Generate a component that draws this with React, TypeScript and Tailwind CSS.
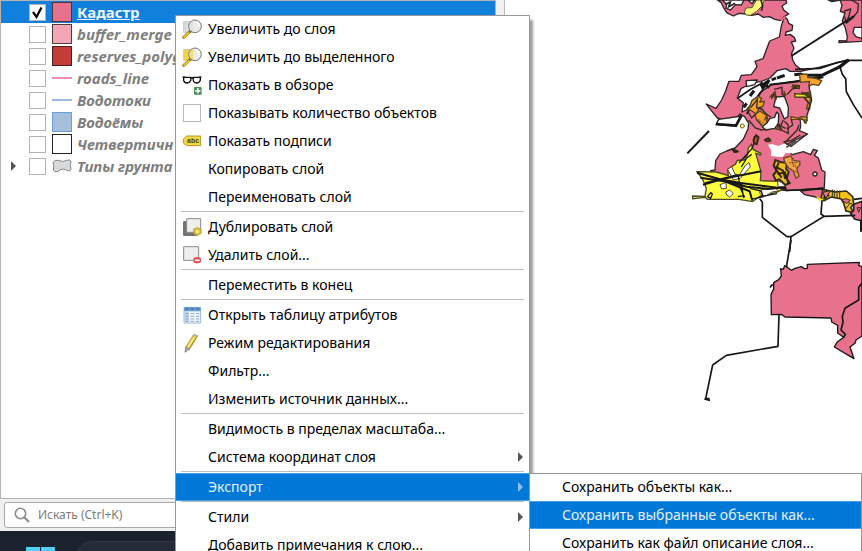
import React from "react";

type Swatch = "fill" | "line" | "polygon";

interface Layer {
  id: string;
  name: string;
  kind: Swatch;
  swatch: string;
  checked?: boolean;
  expandable?: boolean;
}

const layers: Layer[] = [
  { id: "cadastre", name: "Кадастр", kind: "fill", swatch: "bg-[#e8718d] border-[#54303a]", checked: true },
  { id: "buffer", name: "buffer_merge", kind: "fill", swatch: "bg-[#f4a6b4] border-[#4f3a3e]" },
  { id: "reserves", name: "reserves_polyg", kind: "fill", swatch: "bg-[#c33c39] border-[#4a1d1c]" },
  { id: "roads", name: "roads_line", kind: "line", swatch: "bg-[#eb92b2]" },
  { id: "streams", name: "Водотоки", kind: "line", swatch: "bg-[#9cbbe0]" },
  { id: "lakes", name: "Водоёмы", kind: "fill", swatch: "bg-[#a6bedd] border-[#6c9fd8]" },
  { id: "quaternary", name: "Четвертичн", kind: "fill", swatch: "bg-white border-[#232323]" },
  { id: "soil", name: "Типы грунта", kind: "polygon", swatch: "", expandable: true },
];

function LayerSwatch({ layer }: { layer: Layer }) {
  if (layer.kind === "fill") return <span className={`h-5 w-5 border ${layer.swatch}`} />;
  if (layer.kind === "line") return <span className={`h-[2px] w-5 ${layer.swatch}`} />;
  return (
    <svg viewBox="0 0 60 42" className="h-[14px] w-5" aria-hidden="true">
      <path
        d="M3 10 Q8 2 20 4 Q32 11 44 4 Q56 0 57 8 Q53 18 57 30 Q56 38 46 35 Q32 25 20 36 Q8 42 4 33 Q7 22 3 10Z"
        fill="#d9d9d9"
        stroke="#858585"
        strokeWidth="3"
      />
    </svg>
  );
}

function LayerRow({ layer }: { layer: Layer }) {
  return (
    <li className={`flex h-[22px] items-center pl-[10px] ${layer.checked ? "bg-[#1080dc]" : ""}`}>
      <span className="flex w-[18px] shrink-0 items-center">
        {layer.expandable && (
          <svg viewBox="0 0 5 10" className="h-[10px] w-[5px]" aria-hidden="true">
            <path d="M0 0L5 5L0 10Z" fill="#555" />
          </svg>
        )}
      </span>
      <span className="grid h-[17px] w-[17px] shrink-0">
        <input
          id={layer.id}
          type="checkbox"
          defaultChecked={layer.checked}
          className="col-start-1 row-start-1 h-[17px] w-[17px] appearance-none border border-[#b4b4b4] bg-white"
        />
        {layer.checked && (
          <svg viewBox="0 0 17 17" className="pointer-events-none z-10 col-start-1 row-start-1" aria-hidden="true">
            <path d="M4 8L7.5 13L12.5 3.5" fill="none" stroke="#000" strokeWidth="2.2" />
          </svg>
        )}
      </span>
      <span className="mr-[3px] ml-[6px] flex w-[22px] shrink-0 items-center">
        <LayerSwatch layer={layer} />
      </span>
      <label
        htmlFor={layer.id}
        className={`text-[15px] font-bold whitespace-nowrap ${layer.checked ? "text-[#eef6fd] underline" : "text-[#7f7f7f] italic"}`}
      >
        {layer.name}
      </label>
    </li>
  );
}

function ZoomIcon({ tint }: { tint: string }) {
  return (
    <svg viewBox="0 0 60 60" className="h-5 w-5" aria-hidden="true">
      <path d="M5 8H32V40H5Z" fill={tint} stroke="#b5b5a8" strokeWidth="2" />
      <path d="M26 36L5 55" stroke="#8f7c20" strokeWidth="9" strokeLinecap="round" />
      <path d="M20 42L6 54" stroke="#f0c63a" strokeWidth="5" strokeLinecap="round" />
      <circle cx="39" cy="22" r="19" fill="#ecece8" stroke="#777" strokeWidth="3" />
      <path d="M25 12Q29 7 34 6V39Q24 35 23 22Z" fill={tint} opacity="0.65" />
      <path d="M42 9Q51 13 51 23" fill="none" stroke="#fff" strokeWidth="4" />
    </svg>
  );
}

const icons: Record<string, React.ReactNode> = {
  zoom: <ZoomIcon tint="#dcdedd" />,
  zoomSelected: <ZoomIcon tint="#f2d744" />,
  overview: (
    <svg viewBox="0 0 60 60" className="h-5 w-5" aria-hidden="true">
      <path d="M1 6H8L12 8H48L53 6H59" stroke="#111" strokeWidth="3" fill="none" />
      <path d="M5 7H26V17Q22 24 15 24Q7 24 5 16ZM34 7H55V16Q52 24 44 24Q36 24 34 17Z" fill="#fff" stroke="#111" strokeWidth="4" />
      <path d="M26 11Q30 8 34 11" stroke="#111" strokeWidth="3" fill="none" />
      <rect x="36" y="36" width="23" height="23" rx="3" fill="#4f8f5b" />
      <path d="M47.500 40V55M40 47.500H55" stroke="#fff" strokeWidth="5" />
    </svg>
  ),
  labels: (
    <svg viewBox="0 0 60 36" className="h-3 w-5" aria-hidden="true">
      <path d="M14 3H56V32H14L4 24V12Z" fill="#f1d846" stroke="#b49a24" strokeWidth="3" />
      <text x="15" y="25" fontSize="21" fontWeight="700" fontFamily="Liberation Sans, sans-serif" fill="#4c4410">abc</text>
    </svg>
  ),
  duplicate: (
    <svg viewBox="0 0 60 60" className="h-5 w-5" aria-hidden="true">
      <path d="M5 14H14V46H44V55H5Z" fill="#777770" stroke="#666" strokeWidth="3" />
      <path d="M14 5H56V46H14Z" fill="#efefed" stroke="#8b8b86" strokeWidth="3" />
      <path d="M35 36L46 32L57 36V50L46 56L35 50Z" fill="#d7b936" stroke="#b4951f" strokeWidth="2" />
      <path d="M46 36L48 41H54L49 45L51 50L46 47L41 50L43 45L38 41H44Z" fill="#fff5b0" />
    </svg>
  ),
  remove: (
    <svg viewBox="0 0 60 60" className="h-5 w-5" aria-hidden="true">
      <path d="M5 5H50V46H5Z" fill="#eeeeec" stroke="#8b8b86" strokeWidth="3" />
      <rect x="34" y="37" width="23" height="18" rx="7" fill="#ee4750" />
      <path d="M38 46H53" stroke="#fff" strokeWidth="5" />
    </svg>
  ),
  table: (
    <svg viewBox="0 0 60 60" className="h-5 w-5" aria-hidden="true">
      <path d="M6 7H56V54H6Z" fill="#f5f8fc" stroke="#9dbbdc" strokeWidth="3" />
      <path d="M6 6H56V19H6Z" fill="#6d9fd2" />
      <path d="M7 20H21V53H7Z" fill="#b9d3ed" />
      <path d="M10 12H20M26 12H36M42 12H52" stroke="#315f94" strokeWidth="3" />
      <path d="M10 26H19M10 34H19M10 42H19M10 49H19M25 26H37M25 34H37M25 42H37M25 49H37M42 26H52M42 34H52M42 42H52M42 49H52" stroke="#8eacc9" strokeWidth="3" />
    </svg>
  ),
  pencil: (
    <svg viewBox="0 0 60 60" className="h-5 w-5" aria-hidden="true">
      <path d="M34 6L46 11L24 46L10 56L12 41Z" fill="#e5cf49" stroke="#877a2c" strokeWidth="2" />
      <path d="M37 12L18 43" stroke="#fff18e" strokeWidth="4" />
      <path d="M43 14L22 46" stroke="#ad9323" strokeWidth="3" />
      <path d="M36 2L48 7L46 13L33 8Z" fill="#b9b2a0" />
      <path d="M11 43L24 48L9 58Z" fill="#b5b5ad" stroke="#777" strokeWidth="2" />
    </svg>
  ),
};

interface Entry {
  label: string;
  icon?: string;
  sub?: boolean;
  check?: boolean;
  active?: boolean;
}

const groups: Entry[][] = [
  [
    { label: "Увеличить до слоя", icon: "zoom" },
    { label: "Увеличить до выделенного", icon: "zoomSelected" },
    { label: "Показать в обзоре", icon: "overview" },
    { label: "Показывать количество объектов", check: true },
    { label: "Показать подписи", icon: "labels" },
    { label: "Копировать слой" },
    { label: "Переименовать слой" },
  ],
  [
    { label: "Дублировать слой", icon: "duplicate" },
    { label: "Удалить слой...", icon: "remove" },
  ],
  [{ label: "Переместить в конец" }],
  [
    { label: "Открыть таблицу атрибутов", icon: "table" },
    { label: "Режим редактирования", icon: "pencil" },
    { label: "Фильтр..." },
    { label: "Изменить источник данных..." },
  ],
  [{ label: "Видимость в пределах масштаба..." }, { label: "Система координат слоя", sub: true }],
  [{ label: "Экспорт", sub: true, active: true }],
  [{ label: "Стили", sub: true }, { label: "Добавить примечания к слою..." }],
];

const exportEntries: Entry[] = [
  { label: "Сохранить объекты как..." },
  { label: "Сохранить выбранные объекты как...", active: true },
  { label: "Сохранить как файл описание слоя..." },
];

function MenuRow({ entry }: { entry: Entry }) {
  const row = "flex h-7 w-full items-center text-left text-[14px] leading-5 whitespace-nowrap";
  if (entry.check) {
    return (
      <label className={`${row} pl-[7px]`}>
        <input type="checkbox" className="mr-[7px] h-[18px] w-[18px] appearance-none border border-[#b8b8b8] bg-white" />
        {entry.label}
      </label>
    );
  }
  return (
    <button
      type="button"
      className={`${row} pr-[3px] pl-[6px] ${entry.active ? "border-y border-[#3fa0f2] bg-[#0078d7] text-[#e6f2fc]" : ""}`}
    >
      <span className="mr-[6px] flex w-5 shrink-0 items-center">{entry.icon && icons[entry.icon]}</span>
      <span className="flex-1">{entry.label}</span>
      {entry.sub && (
        <svg viewBox="0 0 5 10" className="mr-[3px] h-[10px] w-[5px]" aria-hidden="true">
          <path d="M0 0L5 5L0 10Z" fill={entry.active ? "#8cc2f0" : "#555"} />
        </svg>
      )}
    </button>
  );
}

function MapDrawing() {
  return (
    <svg viewBox="0 0 546 1260" className="h-[420px] w-[182px]" aria-label="Карта">
      <g stroke="#2b2428" strokeWidth="4" strokeLinejoin="round" fill="#e8718d">
        <path d="M112 0L124 8L130 22L140 38L160 48L177 40L198 42L215 46L235 42L250 52L268 50L285 58L303 62L313 50L326 42L311 30L306 18L320 9L318 0Z" />
        <path d="M313 50L322 58L326 70L338 76L336 91L318 96L316 106L330 103L343 112L347 123L334 126L342 145L335 160L338 180L347 196L365 210L390 215L388 265L395 300L386 330L378 356L360 352L362 380L358 392L383 402L338 424L312 438L337 464L370 455L392 464L400 448L412 452L403 466L415 474L425 510L435 516L433 564L318 572L240 560L175 540L95 524L92 512L105 510L107 482L120 462L140 453L165 444L190 418L204 386L206 370L194 350L180 342L165 358L130 360L112 354L91 328L79 312L108 325L125 300L137 273L147 244L177 244L184 226L214 224L231 200L225 184L249 176L258 152L269 123L298 111L304 78Z" />
        <path d="M444 0L456 5L480 0L486 16L481 34L495 39L487 62L496 84L502 110L500 123L477 122V128L546 124V0Z" />
        <path d="M491 34L512 27L508 44L499 70L494 50M515 0L535 12L533 35L518 54L499 70" fill="none" />
      </g>
      <path d="M127 0L140 13L138 24L152 30L166 14L184 15L192 0ZM204 0L216 11L224 0ZM546 82L523 82L519 98L529 111L546 115Z" fill="#fff" stroke="#292527" strokeWidth="4" />
      <path d="M193 36L198 24L217 23L223 10L230 0H253L247 17L229 35L211 46L198 45Z" fill="#ffff80" stroke="#5b552e" strokeWidth="3" />
      <path d="M136 13L151 6L146 20L165 10M243 0L248 18L244 32" fill="none" stroke="#242124" strokeWidth="5" />

      <path d="M303 62L316 50" stroke="#e8718d" strokeWidth="5" />
      <g stroke="#292527" strokeWidth="4" fill="#fff" strokeLinejoin="round">
        <path d="M172 294L183 266L198 258L214 248L242 245L270 234L291 212L318 206L330 214L362 214L400 206L474 188L505 178L476 199L430 227L370 240L275 254L240 278L222 303L199 330L186 336L190 308Z" />
        <path d="M198 242L232 240L224 254L200 260Z" />
        <path d="M288 291L313 289L325 321L324 350L313 357L299 324L281 320Z" />
        <path d="M247 380L260 370L270 355L284 352L290 336L296 342L295 370L284 385L257 390Z" />
        <path d="M116 358L185 348L168 378L108 374Z" />
        <path d="M264 434L276 432L295 438L315 430L333 446L342 460L316 460L308 472L273 468L274 452Z" stroke="none" />
      </g>
      <g fill="none" stroke="#171717" strokeWidth="5">
        <path d="M334 168L522 48" strokeWidth="6" />
        <path d="M345 208L420 205L470 188L506 181H546" />
        <path d="M343 224L362 222L370 226H425L481 200L506 180" strokeWidth="9" />
        <path d="M268 254L345 245L430 232" strokeWidth="6" />
        <path d="M174 294L212 268L246 250M200 342L240 281L252 262" />
        <path d="M108 372L168 377L184 347" strokeWidth="8" />
        <path d="M241 259L269 241M246 267L265 245M241 249L268 262" strokeWidth="9" />
        <path d="M291 234L314 226M210 288L222 272M191 322L200 310M275 240L288 234" strokeWidth="9" />
        <path d="M479 198L487 223L497 236L499 275L520 314L546 354" />
        <path d="M22 460L87 393" strokeWidth="6" />
      </g>

      <g stroke="#54451b" strokeWidth="4" fill="#f6a12c" strokeLinejoin="round">
        <path d="M359 223H383V232L408 235L425 242L416 256L397 253L386 259L389 244L361 247Z" />
        <path d="M206 329L216 301L235 289L245 296L239 306L253 304L248 320L238 322L229 342L211 330Z" />
        <path d="M225 344L240 333L260 346L263 358L246 377L230 360Z" />
        <path d="M338 255L359 257L357 266L340 263ZM375 279L392 276L389 329L379 326L385 308L373 295Z" />
        <path d="M333 350L355 355L366 350L382 352L378 369L367 357L334 359Z" />
        <path d="M270 291L285 274L289 297L277 286ZM312 274L317 285L312 290Z" />
        <path d="M296 372L303 377L298 389L287 387L296 380ZM233 360L251 366L258 350L262 360L246 377Z" />
        <path d="M371 360L382 360L375 370ZM290 376L298 380L302 392ZM257 418L270 417L267 425Z" />
      </g>
      <path d="M344 281L388 284L387 292L345 291ZM364 277L390 282V293ZM335 260L358 258V265Z" fill="#f4df19" stroke="#443b18" strokeWidth="4" />
      <g fill="none" stroke="#382b25" strokeWidth="4">
        <path d="M282 268L306 262L306 282L315 290M290 294L282 282L274 297M321 284L336 267L352 263M373 291L390 314L384 331" />
        <path d="M212 323L232 298L230 323L250 329M227 342L215 354L202 332M239 322L260 343L273 351M310 360L302 378L317 385M334 358L338 375L320 388" />
        <path d="M357 374L351 391L314 428L333 439L382 402M294 370L306 391L325 400L324 374L313 364" />
        <path d="M206 360L226 384L244 390L262 388M310 426L335 421L361 405M319 442L347 423M159 448L173 455L162 456" />
      </g>
      <path d="M233 360L258 362L254 372L246 377L256 360L258 368L246 366Z" fill="#f6a12c" />
      <circle cx="187" cy="378" r="6" fill="#ffff70" stroke="#675a24" strokeWidth="3" />

      <g transform="translate(0 360)">
        <path d="M51 35L109 36L145 47L143 28L166 13L172 1L192 0L203 -18L205 -36L214 -47L220 -31L243 -20L242 -15L227 -20L243 35L241 62L294 64L312 86L288 98L240 108L218 125L177 118H82L77 112L38 116V108L75 109L79 85L68 58Z" transform="translate(0 120)" fill="#ffff42" stroke="#4c4826" strokeWidth="4" />
        <path d="M143 148L155 140L165 162L178 165L196 136L207 128L211 140L181 175L160 180ZM120 194L138 187L139 205L125 207ZM137 216L149 210L160 221L149 231L140 225ZM241 210L285 203L295 213L276 216L256 229L239 220ZM293 183L314 189L316 201L294 200Z" fill="#fff" stroke="#4c4826" strokeWidth="3" />
        <g stroke="#171717" strokeWidth="6" fill="none">
          <path d="M51 158L120 178L182 189L320 207M61 173L142 185L200 200L264 207L318 202" />
          <path d="M69 194L130 176L243 154M75 190L170 166M120 178L209 214L217 242" />
          <path d="M175 168L181 205L194 232M184 190L191 234M210 205L244 213L249 230L214 238" strokeWidth="4" />
          <path d="M241 230L291 221M83 230L92 218L97 222L92 235ZM174 230L192 227" strokeWidth="4" />
          <path d="M177 129L215 87L222 70L223 49M184 141L201 113L215 103" strokeWidth="4" />
        </g>
        <path d="M223 71L220 60L228 45L236 52L230 73ZM255 60L265 54L271 62L259 64ZM158 89L174 94L163 96Z" fill="#8f621e" stroke="#2b2514" strokeWidth="5" />
        <path d="M281 137L286 120L301 126L321 129L318 146L326 156L320 176L329 189L316 195L298 178L287 181L280 165L290 153Z" fill="#eebc20" stroke="#332b18" strokeWidth="6" />
        <path d="M286 140L309 152L316 177M292 162L315 157L325 190M296 128L288 149L305 173" fill="none" stroke="#30240d" strokeWidth="6" />
        <path d="M311 114L332 108L341 121L359 124L360 134L350 145L357 169L348 175L340 153L326 144L315 128Z" fill="#f0a743" stroke="#6b472b" strokeWidth="4" />
        <path d="M327 128H352M335 117L341 141M344 133L352 151M337 151L355 158" stroke="#8a592e" strokeWidth="3" />
        <circle cx="405" cy="162" r="6" fill="#e4f0ef" stroke="#302b2d" strokeWidth="4" />
        <path d="M362 213L407 208L431 207L425 242L407 231L374 224Z" fill="#e8718d" stroke="#292527" strokeWidth="4" />
        <path d="M429 208L465 216L499 213L518 230L521 251L512 263L522 278L498 273L491 250L484 237L453 231L432 242L423 235Z" fill="#f2c318" stroke="#322d1b" strokeWidth="5" />
        <path d="M457 208V233M463 210V231M471 211V233M479 212V234M432 213L448 226L430 239M442 210L434 238M492 244L516 252M496 267L511 250" stroke="#322d1b" strokeWidth="3" />
        <path d="M428 217L451 212L438 235Z" fill="#e8718d" stroke="#332a1b" strokeWidth="3" />
        <path d="M406 229L432 239L420 243Z" fill="#fff22c" />
        <path d="M521 253L546 244V303L524 297L512 281L521 271Z" fill="#e8718d" stroke="#202020" strokeWidth="5" />
        <path d="M484 240L497 236L511 241L500 250ZM531 263L542 263L536 277Z" fill="#e8718d" stroke="#302c22" strokeWidth="3" />
        <g fill="none" stroke="#171717" strokeWidth="5">
          <path d="M318 211L365 210L430 205" />
          <path d="M239 236L247 246V292L321 350H333L432 289L526 286M333 348L329 396M426 242L423 282L434 290M522 238L546 235" />
          <path d="M544 299V335" strokeWidth="8" />
        </g>
      </g>

      <g transform="translate(0 720)" fill="none" stroke="#171717" strokeWidth="5" strokeLinejoin="round">
        <path d="M333 0L319 82" />
        <path d="M302 86L310 88L314 77L322 82L334 91L345 85L364 80L373 86L382 85V73L538 67L536 76L546 80V288L528 300L525 310L510 321L522 356L463 321L471 307L491 292L473 279V256L455 246L453 234L315 231L304 223L274 224L273 163L281 147V128L296 119L304 108Z" fill="#e8718d" strokeWidth="4" />
        <path d="M546 130L536 142V180L495 205L487 229L489 247L483 270L496 283L491 292M270 142L278 133M297 223L294 319L139 346L98 375L77 476H89" />
        <path d="M73 477L90 481" />
      </g>
    </svg>
  );
}

export default function App() {
  return (
    <div className="relative flex h-screen w-full flex-col overflow-hidden bg-[#f0f0f0] font-['Noto_Sans','Open_Sans',sans-serif] text-black">
      <main className="flex min-h-0 flex-1">
        <aside className="flex w-[505px] shrink-0 flex-col border-r border-[#b9b9b9]">
          <ul className="mr-2 min-h-0 flex-1 overflow-hidden border border-[#b4b4b4] bg-white" aria-label="Слои">
            {layers.map((layer) => (
              <LayerRow key={layer.id} layer={layer} />
            ))}
          </ul>
          <div className="px-1 py-[3px]">
            <label className="flex h-[26px] items-center gap-2 rounded-[3px] border border-[#a9a9a9] bg-white pl-[9px]">
              <svg viewBox="0 0 16 16" className="h-4 w-4 shrink-0" fill="none" stroke="#8c8c8c" aria-hidden="true">
                <circle cx="6.500" cy="6.500" r="5.200" strokeWidth="1.600" />
                <path d="M10.300 10.300L15 15" strokeWidth="2.200" />
              </svg>
              <input
                type="search"
                aria-label="Искать"
                placeholder="Искать (Ctrl+K)"
                className="min-w-0 flex-1 bg-transparent text-[12px] placeholder:text-[#7c7c7c] focus:outline-none"
              />
            </label>
          </div>
        </aside>
        <section className="flex min-w-0 flex-1 items-start justify-end bg-white">
          <MapDrawing />
        </section>
      </main>

      <footer className="flex h-5 shrink-0 items-start overflow-hidden bg-[#1b212d] pt-[10px] pl-[26px]">
        <svg viewBox="0 0 29 29" className="mt-[6px] h-[29px] w-[29px] shrink-0" aria-hidden="true">
          <path d="M0 0H14V14H0ZM15 0H29V14H15Z" fill="#4fd0f7" />
          <path d="M0 15H14V29H0ZM15 15H29V29H15Z" fill="#2ba9ee" />
        </svg>
        <div className="ml-5 h-9 w-72 shrink-0 rounded-full border border-[#303743] bg-[#252c37]" />
      </footer>

      <nav
        aria-label="Меню слоя"
        className="absolute top-[15px] left-[175px] w-[355px] border-x border-[#979797] bg-white shadow-[3px_5px_2px_#a0a0a0,inset_0_1px_0_#979797]"
      >
        {groups.map((group, i) => (
          <div key={group[0].label}>
            {i > 0 && <hr className="mx-[5px] mb-px border-t border-[#bfbfbf]" />}
            {group.map((entry) => (
              <MenuRow key={entry.label} entry={entry} />
            ))}
          </div>
        ))}
      </nav>

      <nav
        aria-label="Экспорт"
        className="absolute top-[473px] right-0 left-[529px] border-x border-[#979797] bg-white shadow-[inset_0_1px_0_#979797]"
      >
        {exportEntries.map((entry) => (
          <MenuRow key={entry.label} entry={entry} />
        ))}
      </nav>
    </div>
  );
}
